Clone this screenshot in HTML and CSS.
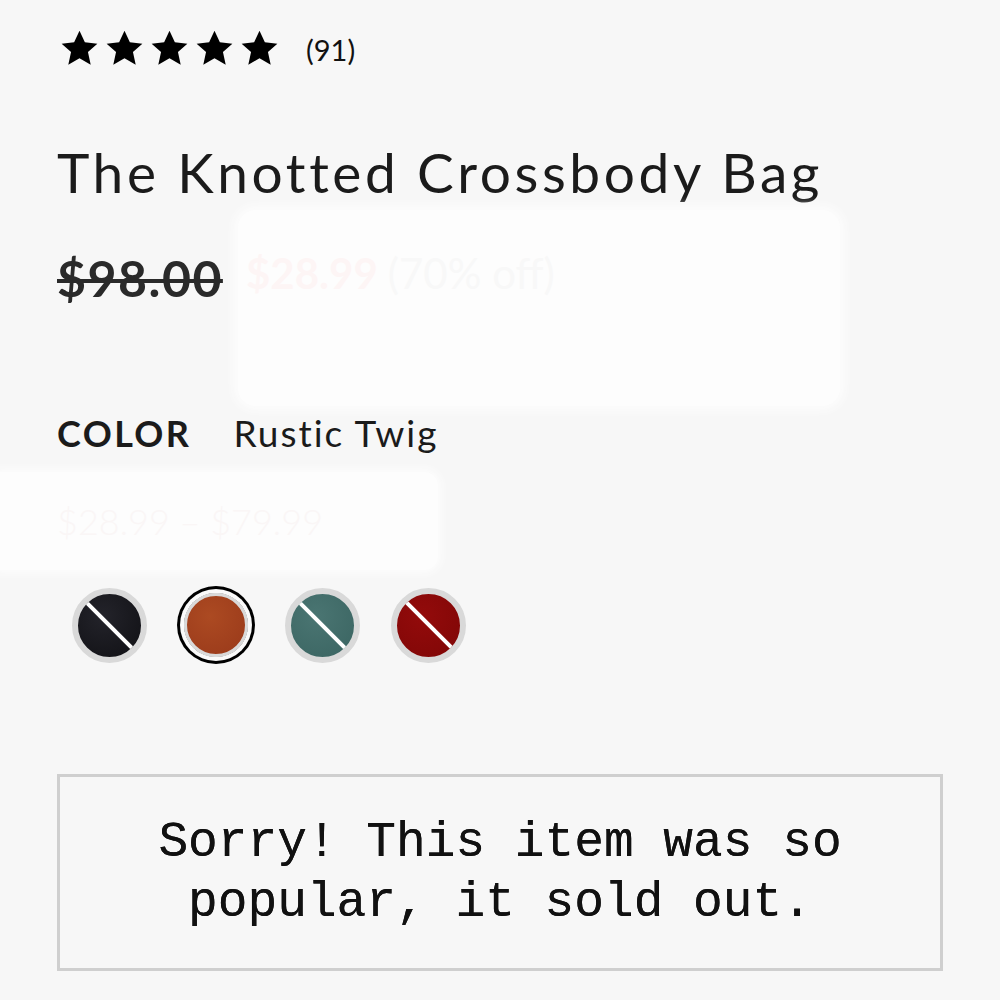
FILE: index.html
```html
<!DOCTYPE html>
<html lang="en">
<head>
  <meta charset="UTF-8">
  <meta name="viewport" content="width=device-width, initial-scale=1.0">
  <title>The Knotted Crossbody Bag</title>
  <link rel="stylesheet" href="styles.css">
</head>
<body>

  <div class="product-page">
    <!-- Note -->
    <div class="rating-row">
      <div class="stars">
        <svg class="star" viewBox="0 0 24 24"><path d="M12 1l3.3 7.2 7.7.8-5.8 5.2 1.7 7.8L12 18l-6.9 4 1.7-7.8L1 9l7.7-.8z"/></svg>
        <svg class="star" viewBox="0 0 24 24"><path d="M12 1l3.3 7.2 7.7.8-5.8 5.2 1.7 7.8L12 18l-6.9 4 1.7-7.8L1 9l7.7-.8z"/></svg>
        <svg class="star" viewBox="0 0 24 24"><path d="M12 1l3.3 7.2 7.7.8-5.8 5.2 1.7 7.8L12 18l-6.9 4 1.7-7.8L1 9l7.7-.8z"/></svg>
        <svg class="star" viewBox="0 0 24 24"><path d="M12 1l3.3 7.2 7.7.8-5.8 5.2 1.7 7.8L12 18l-6.9 4 1.7-7.8L1 9l7.7-.8z"/></svg>
        <svg class="star" viewBox="0 0 24 24"><path d="M12 1l3.3 7.2 7.7.8-5.8 5.2 1.7 7.8L12 18l-6.9 4 1.7-7.8L1 9l7.7-.8z"/></svg>
      </div>
      <span class="review-count">(91)</span>
    </div>

    <h1 class="product-title">The Knotted Crossbody Bag</h1>

    <!-- Prix -->
    <div class="price-row">
      <span class="price-old">$98.00</span>
      <div class="price-patch">
        <span class="price-sale">$28.99</span>
        <span class="price-off">(70% off)</span>
      </div>
    </div>

    <!-- Couleur -->
    <div class="color-row">
      <span class="color-label">COLOR</span>
      <span class="color-name">Rustic Twig</span>
    </div>

    <div class="range-row">
      <span class="range-text">$28.99 – $79.99</span>
    </div>

    <div class="swatches">
      <div class="swatch-cell"><span class="swatch is-out swatch-black"></span></div>
      <div class="swatch-cell"><span class="swatch is-selected swatch-brown"></span></div>
      <div class="swatch-cell"><span class="swatch is-out swatch-teal"></span></div>
      <div class="swatch-cell"><span class="swatch is-out swatch-red"></span></div>
    </div>

    <!-- Rupture de stock -->
    <div class="soldout-box">
      <p class="soldout-text">Sorry! This item was so<br>popular, it sold out.</p>
    </div>
  </div>

</body>
</html>
```

FILE: styles.css
```css
:root {
  --page-bg: #f7f7f7;
  --text-color: #1b1b1b;
  --price-color: #2a2a2a;
  --ring-grey: #d9d9d9;
  --patch: #fdfdfd;
  --box-border: #cfcfcf;
}

body {
  margin: 0;
  background-color: var(--page-bg);
  color: var(--text-color);
  font-family: Lato, "Noto Sans", sans-serif;
}

.product-page {
  padding: 29px 57px 0;
}

.rating-row {
  display: flex;
  align-items: center;
  gap: 27px;
  height: 38px;
  margin-left: 3px;
}

.stars {
  display: flex;
  gap: 6px;
}

.star {
  width: 39px;
  height: 39px;
  fill: #000;
}

.review-count {
  font-size: 29px;
  color: #111;
  margin-top: 2px;
}

.product-title {
  margin: 73px 0 0;
  font-size: 55px;
  font-weight: 400;
  line-height: 64px;
  letter-spacing: 3.6px;
}

.price-row {
  position: relative;
  display: flex;
  align-items: center;
  margin-top: 46px;
  height: 56px;
}

.price-old {
  font-size: 50px;
  font-weight: 700;
  line-height: 56px;
  color: var(--price-color);
  text-decoration: line-through;
  text-decoration-thickness: 4px;
  letter-spacing: 1.5px;
}

/* bloc blanc par-dessus le prix soldé */
.price-patch {
  position: absolute;
  left: 181px;
  top: -40px;
  width: 602px;
  height: 196px;
  background: var(--patch);
  border-radius: 18px;
  box-shadow: 0 0 10px 4px var(--patch);
  display: flex;
  align-items: flex-start;
  gap: 10px;
  padding: 38px 0 0 8px;
  box-sizing: border-box;
  font-size: 42px;
}

.price-sale {
  color: #fdf5f5;
  font-weight: 700;
}

.price-off {
  color: #f8f8f8;
}

.color-row {
  display: flex;
  align-items: baseline;
  gap: 42px;
  margin-top: 105px;
  font-size: 36px;
  line-height: 44px;
}

.color-label {
  font-weight: 700;
  letter-spacing: 2.4px;
}

.color-name {
  font-size: 37px;
  letter-spacing: 2px;
}

.range-row {
  margin: 17px 0 0 -57px;
  width: 438px;
  height: 98px;
  padding-left: 57px;
  box-sizing: border-box;
  background: var(--patch);
  border-radius: 0 14px 14px 0;
  box-shadow: 0 0 8px 3px var(--patch);
  display: flex;
  align-items: center;
  font-size: 36px;
  font-weight: 300;
  color: #faf6f6;
}

.swatches {
  display: grid;
  grid-template-columns: repeat(4, 82px);
  column-gap: 24.5px;
  margin: 14px 0 0 11px;
}

.swatch-cell {
  display: flex;
  justify-content: center;
  align-items: center;
  height: 82px;
}

.swatch {
  position: relative;
  display: block;
  border-radius: 50%;
  overflow: hidden;
}

.swatch.is-out {
  width: 63px;
  height: 63px;
  border: 6px solid var(--ring-grey);
}

.swatch.is-out::after {
  content: "";
  position: absolute;
  left: 50%;
  top: 50%;
  width: 110px;
  height: 4px;
  background: #fff;
  transform: translate(-50%, -50%) rotate(45deg);
}

.swatch.is-selected {
  width: 58px;
  height: 58px;
  border: 3px solid var(--ring-grey);
  box-shadow: 0 0 0 4px #fafafa, 0 0 0 7px #000;
  overflow: visible;
}

.swatch-black {
  background: radial-gradient(circle at 40% 35%, #23232a, #101014);
}

.swatch-brown {
  background: radial-gradient(circle at 40% 35%, #ac4a22, #99391a);
}

.swatch-teal {
  background: radial-gradient(circle at 40% 35%, #4a7572, #3a6461);
}

.swatch-red {
  background: radial-gradient(circle at 40% 35%, #930b0b, #7f0606);
}

.soldout-box {
  margin-top: 108px;
  height: 197px;
  border: 3px solid var(--box-border);
  box-sizing: border-box;
  display: flex;
  align-items: center;
  justify-content: center;
}

.soldout-text {
  margin: 0;
  font-family: "Liberation Mono", "Courier New", monospace;
  font-size: 49.5px;
  line-height: 60px;
  text-align: center;
  color: #111;
  text-shadow: 0 0 0.6px #111;
}
```
